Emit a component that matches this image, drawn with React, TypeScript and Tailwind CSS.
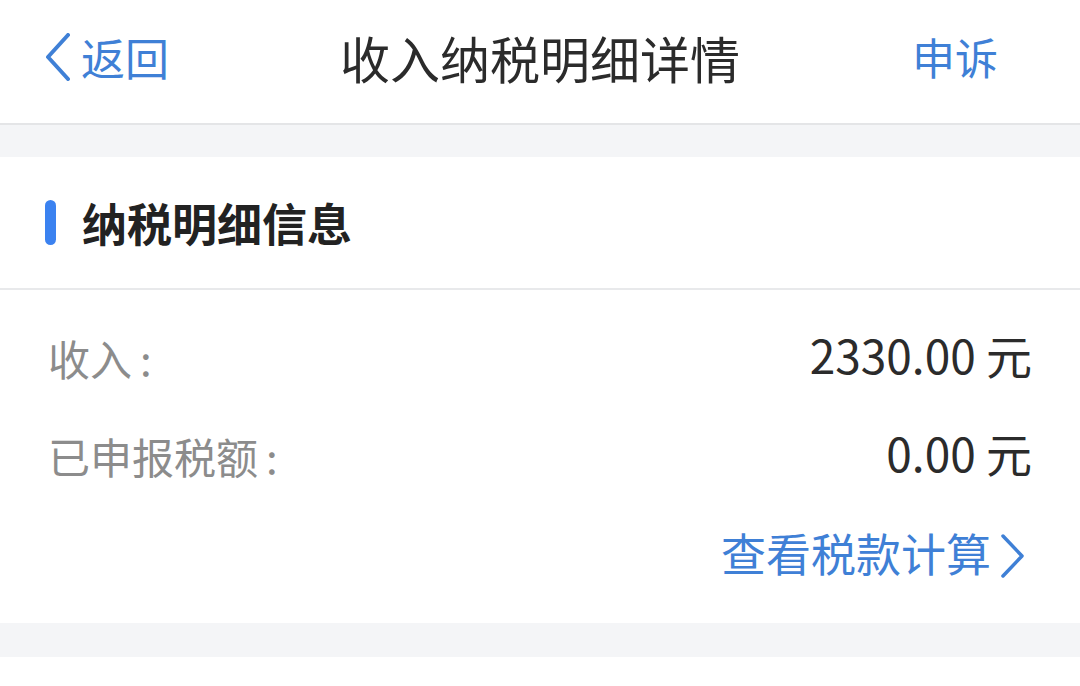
import React from 'react';

const font = { fontFamily: '"Noto Sans CJK SC", "Noto Sans", sans-serif' };

function App() {
  return (
    <div className="w-[1080px] h-[686px] bg-white overflow-hidden" style={font}>
      {/* Nav bar */}
      <header className="h-[125px] pb-[10px] flex items-center justify-between px-[45px] border-b-2 border-[#e4e5e7] bg-white">
        <div className="flex items-center w-[200px] text-[#3f80d6]">
          <svg width="26" height="48" viewBox="0 0 26 48" className="mr-[10px]">
            <polyline points="23,2 3,24 23,46" fill="none" stroke="#3f80d6" strokeWidth="4" strokeLinecap="round" strokeLinejoin="round" />
          </svg>
          <span className="text-[44px] leading-none">返回</span>
        </div>
        <h1 className="text-[50px] leading-none text-[#2b2b2b]">收入纳税明细详情</h1>
        <div className="w-[200px] flex justify-end pr-[37px]">
          <span className="text-[43px] leading-none text-[#3f80d6]">申诉</span>
        </div>
      </header>

      <div className="h-[32px] bg-[#f4f5f7]" />

      {/* Card */}
      <section className="bg-white">
        <div className="h-[133px] flex items-center px-[45px] border-b-2 border-[#e8e9eb]">
          <div className="w-[11px] h-[45px] rounded-full bg-[#3b82f0] mr-[26px]" />
          <h2 className="text-[45px] leading-none font-bold text-[#222]">纳税明细信息</h2>
        </div>
        <div className="pt-[18px] pb-[21px] px-[48px]">
          <div className="h-[98px] flex items-center justify-between">
            <span className="text-[42px] text-[#8c8c8c]">收入<span className="ml-[8px]">:</span></span>
            <span className="text-[46px] text-[#2b2b2b] mb-[5px]">2330.00 元</span>
          </div>
          <div className="h-[98px] flex items-center justify-between">
            <span className="text-[42px] text-[#8c8c8c]">已申报税额<span className="ml-[8px]">:</span></span>
            <span className="text-[46px] text-[#2b2b2b] mb-[5px]">0.00 元</span>
          </div>
          <div className="h-[98px] flex items-center justify-end">
            <span className="text-[45px] text-[#3f80d6]">查看税款计算</span>
            <svg width="27" height="44" viewBox="0 0 27 44" className="ml-[8px] mr-[6px] mt-[6px]">
              <polyline points="4,2 23,22 4,42" fill="none" stroke="#3f80d6" strokeWidth="3.5" strokeLinecap="round" strokeLinejoin="round" />
            </svg>
          </div>
        </div>
      </section>

      <div className="h-[34px] bg-[#f4f5f7]" />
      <div className="bg-white h-[40px]" />
    </div>
  );
}

export default App;
